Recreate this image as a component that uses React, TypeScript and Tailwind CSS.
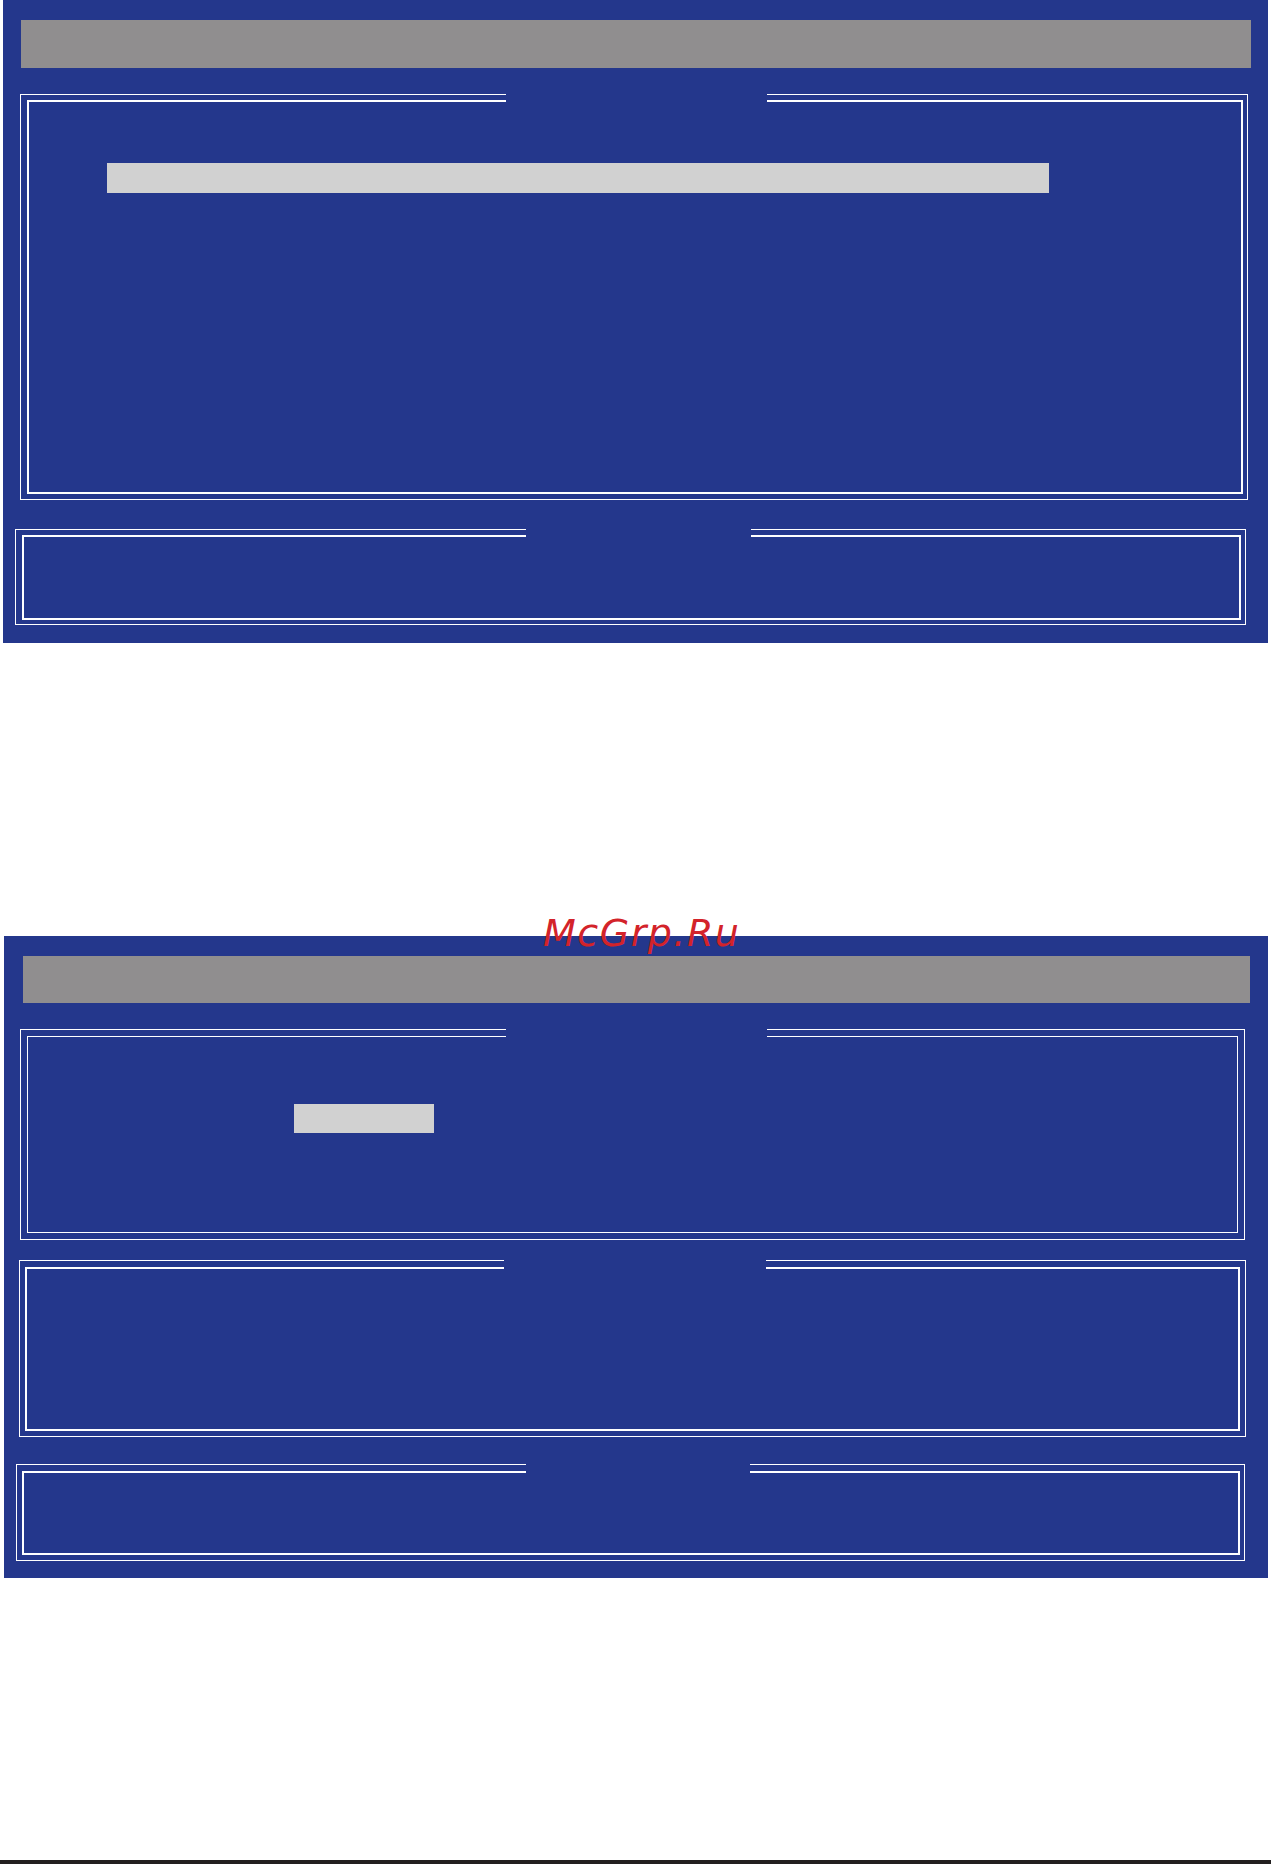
import type { ReactNode } from "react";

// Double-ruled BIOS-style frame. The blank span on top is the title slot that
// interrupts both rules.
function Frame({
  className,
  innerClass = "border-2",
  gapClass,
  children,
}: {
  className: string;
  innerClass?: string;
  gapClass: string;
  children?: ReactNode;
}) {
  return (
    <div className={`relative box-border border border-white ${className}`}>
      <div className={`box-border h-full border-white ${innerClass}`}>{children}</div>
      <span className={`absolute -top-px h-[9px] bg-[#24378c] ${gapClass}`} />
    </div>
  );
}

export default function App() {
  return (
    <div className="relative flex min-h-[1864px] w-[1271px] flex-col bg-white">
      {/* Screen 1 */}
      <div className="ml-[3px] box-border flex h-[643px] w-[1265px] flex-col bg-[#24378c] pt-[20px]">
        <div className="ml-[18px] h-[48px] w-[1230px] bg-[#908e8f]" />

        <Frame
          className="ml-[17px] mt-[26px] h-[406px] w-[1228px] pb-[5px] pl-[6px] pr-[4px] pt-[5px]"
          gapClass="left-[485px] w-[261px]"
        >
          <div className="ml-[78px] mt-[61px] h-[30px] w-[942px] bg-[#d1d1d1]" />
        </Frame>

        <Frame
          className="ml-[12px] mt-[29px] h-[96px] w-[1231px] pb-[4px] pl-[6px] pr-[4px] pt-[5px]"
          gapClass="left-[510px] w-[225px]"
        />
      </div>

      {/* Screen 2 */}
      <div className="ml-[4px] mt-[293px] box-border flex h-[642px] w-[1264px] flex-col bg-[#24378c] pt-[20px]">
        <div className="ml-[19px] h-[47px] w-[1227px] bg-[#908e8f]" />

        <Frame
          className="ml-[16px] mt-[26px] h-[211px] w-[1225px] p-[6px]"
          innerClass="border"
          gapClass="left-[485px] w-[261px]"
        >
          <div className="ml-[266px] mt-[67px] h-[29px] w-[140px] bg-[#d1d1d1]" />
        </Frame>

        <Frame
          className="ml-[15px] mt-[20px] h-[177px] w-[1227px] pb-[5px] pl-[5px] pr-[5px] pt-[6px]"
          gapClass="left-[484px] w-[262px]"
        />

        <Frame
          className="ml-[12px] mt-[27px] h-[97px] w-[1229px] pb-[5px] pl-[5px] pr-[4px] pt-[6px]"
          gapClass="left-[509px] w-[224px]"
        />
      </div>

      <div className="mt-auto h-[4px] w-full bg-[#231f20]" />

      <span className="absolute left-[543px] top-[914px] text-[38px] italic leading-none tracking-[1.5px] text-[#d3232a] [font-family:'DejaVu_Sans',sans-serif]">
        McGrp.Ru
      </span>
    </div>
  );
}
